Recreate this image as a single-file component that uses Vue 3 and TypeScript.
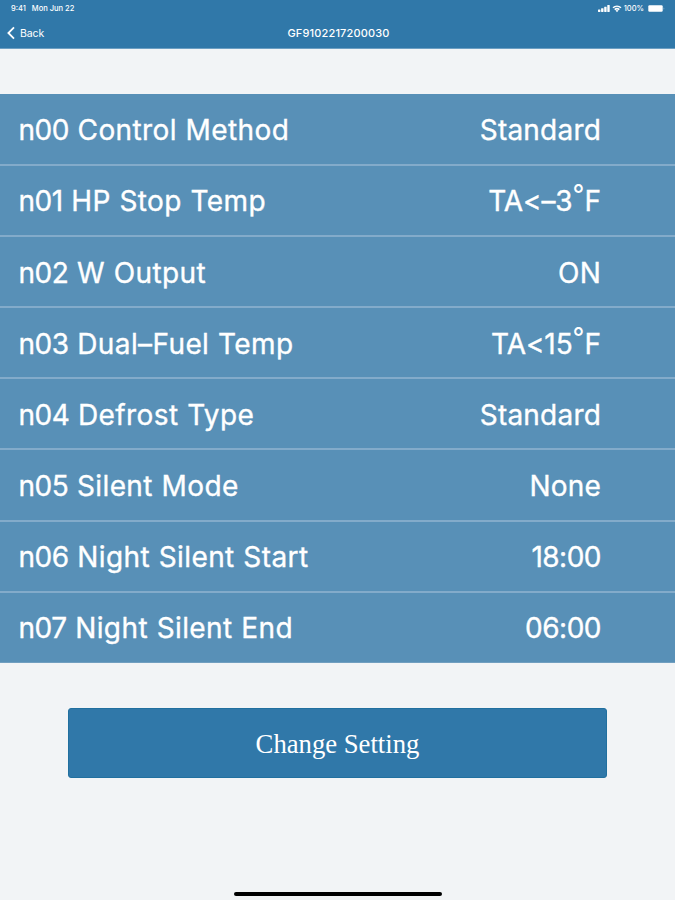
<script setup lang="ts">
interface Setting {
  code: string
  name: string
  value: string
  unit?: string
}

const settings: Setting[] = [
  { code: 'n00', name: 'Control Method', value: 'Standard' },
  { code: 'n01', name: 'HP Stop Temp', value: 'TA<–3', unit: 'F' },
  { code: 'n02', name: 'W Output', value: 'ON' },
  { code: 'n03', name: 'Dual–Fuel Temp', value: 'TA<15', unit: 'F' },
  { code: 'n04', name: 'Defrost Type', value: 'Standard' },
  { code: 'n05', name: 'Silent Mode', value: 'None' },
  { code: 'n06', name: 'Night Silent Start', value: '18:00' },
  { code: 'n07', name: 'Night Silent End', value: '06:00' },
]

const isNumeric = (value: string): boolean => value.includes(':')
</script>

<template>
  <div class="screen">
    <header class="header">
      <div class="status">
        <span class="time">9:41</span>
        <span class="date">Mon Jun 22</span>
        <div class="indicators">
          <svg class="signal" viewBox="0 0 12 7" width="12" height="7" fill="#fff">
            <rect x="0" y="4.5" width="2.4" height="2.5" rx=".4" />
            <rect x="3.1" y="3.2" width="2.4" height="3.8" rx=".4" />
            <rect x="6.2" y="1.7" width="2.4" height="5.3" rx=".4" />
            <rect x="9.3" y="0" width="2.4" height="7" rx=".4" />
          </svg>
          <svg class="wifi" viewBox="0 0 10 8" width="10" height="8">
            <path d="M1 2.8C3.3.8 6.7.8 9 2.8M2.7 4.6c1.3-1.1 3.3-1.1 4.6 0" fill="none" stroke="#fff" stroke-width="1.5" />
            <path d="M3.5 5.6c.8-.7 2.2-.7 3 0L5 7.3z" fill="#fff" />
          </svg>
          <span class="percent">100%</span>
          <svg class="battery" viewBox="0 0 17 7" width="17" height="7">
            <rect x=".3" y=".3" width="14.4" height="6.4" rx="1.2" fill="#fff" />
            <path d="M15.6 2.4v2.2c.9-.3.9-1.9 0-2.2z" fill="#fff" opacity=".55" />
          </svg>
        </div>
      </div>
      <nav class="nav">
        <div class="back">
          <svg viewBox="0 0 8 14" width="8" height="14">
            <path d="M7 1.4 1.4 7 7 12.6" fill="none" stroke="#fff" stroke-width="1.8" />
          </svg>
          <span>Back</span>
        </div>
        <div class="title">GF9102217200030</div>
      </nav>
    </header>

    <main class="settings">
      <div v-for="item in settings" :key="item.code" class="row">
        <span class="label"><span class="code">{{ item.code }}</span> {{ item.name }}</span>
        <span class="value" :class="{ numeric: isNumeric(item.value), temperature: item.unit }">{{ item.value }}<template v-if="item.unit"><span class="degree">°</span>{{ item.unit }}</template></span>
      </div>
    </main>

    <button class="change">Change Setting</button>
    <div class="home"></div>
  </div>
</template>

<style>
body {
  background: #f2f4f6;
}
</style>

<style scoped>
.screen {
  box-sizing: border-box;
  width: 675px;
  height: 900px;
  display: flex;
  flex-direction: column;
  align-items: center;
  overflow: hidden;
  background: #f2f4f6;
  color: #fff;
  font-family: Inter, "Liberation Sans", sans-serif;
}
.header {
  box-sizing: border-box;
  width: 100%;
  height: 49px;
  flex: none;
  background: #3078a9;
  border-bottom: 1px solid #6c9fc3;
}
.status {
  height: 17px;
  display: flex;
  align-items: center;
  padding: 0 10px 0 11px;
  font-size: 7.5px;
  font-weight: 500;
}
.date {
  margin-left: 6px;
}
.indicators {
  margin-left: auto;
  display: flex;
  align-items: center;
}
.wifi {
  margin-left: 2px;
}
.percent {
  margin: 0 4px 0 2px;
}
.nav {
  height: 32px;
  display: grid;
  grid-template-columns: 1fr auto 1fr;
  align-items: center;
}
.back {
  display: flex;
  align-items: center;
  gap: 5px;
  padding-left: 7px;
  font-size: 10.5px;
  letter-spacing: -0.1px;
}
.title {
  padding-left: 2px;
  font-size: 11px;
  font-weight: 500;
  letter-spacing: 0.15px;
}
.settings {
  box-sizing: border-box;
  width: 100%;
  height: 569px;
  flex: none;
  margin-top: 45px;
  padding-top: 0.7px;
  display: grid;
  grid-template-rows: repeat(8, 71.15px);
  overflow: hidden;
  background: #5890b7;
}
.row {
  box-sizing: border-box;
  display: flex;
  align-items: center;
  justify-content: space-between;
  padding: 2px 74px 0 18.5px;
  border-bottom: 2px solid #83abca;
  font-size: 28px;
  line-height: 34px;
  letter-spacing: 0.2px;
  white-space: nowrap;
  -webkit-text-stroke: 0.35px #fff;
}
.row:last-child {
  border-bottom-color: #719fc0;
}
.label {
  letter-spacing: 0.4px;
  word-spacing: 0.4px;
}
.code {
  letter-spacing: -0.5px;
}
.numeric {
  letter-spacing: -0.5px;
}
.temperature {
  letter-spacing: -0.1px;
}
.degree {
  display: inline-block;
  width: 12px;
  font-size: 26px;
  line-height: 18px;
  vertical-align: 8px;
  -webkit-text-stroke-width: 0;
}
.change {
  width: 539px;
  height: 70px;
  flex: none;
  margin: 45px 0 0;
  padding: 2px 0 0;
  border: 1px solid #21709f;
  border-radius: 3px;
  background: #3078a9;
  color: #fff;
  font: 26.7px "Liberation Serif", serif;
}
.home {
  width: 208px;
  height: 4px;
  margin: auto 0 4px;
  border-radius: 2px;
  background: #000;
}
</style>
